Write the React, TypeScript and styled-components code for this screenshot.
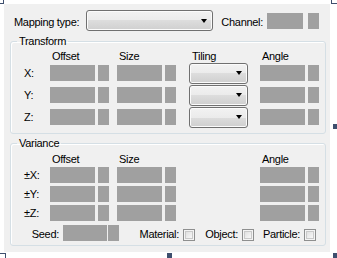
import React from 'react';
import styled, { createGlobalStyle } from 'styled-components';

const Global = createGlobalStyle`
  html, body { margin: 0; padding: 0; background: #fff; }
  body {
    font-family: "Liberation Sans", Arial, sans-serif;
    font-size: 11px;
    letter-spacing: -0.3px;
    color: #000;
  }
`;

const Canvas = styled.div`
  position: relative;
  width: 337px;
  height: 258px;
  box-sizing: border-box;
  padding: 4px 0 0 4px;
  background: #fff;
  overflow: hidden;
`;

const Panel = styled.div`
  width: 326px;
  height: 248px;
  box-sizing: border-box;
  background: #f0f0f0;
  padding: 6px 0 0 6px;
  display: flex;
  flex-direction: column;
`;

const TopRow = styled.div`
  display: flex;
  align-items: center;
  height: 21px;
  padding-left: 4px;
`;

const Label = styled.span<{ $w?: number; $right?: boolean; $pr?: number }>`
  display: block;
  box-sizing: border-box;
  width: ${(p) => (p.$w ? `${p.$w}px` : 'auto')};
  text-align: ${(p) => (p.$right ? 'right' : 'left')};
  padding-right: ${(p) => p.$pr ?? 0}px;
  padding-top: 3px;
  line-height: 13px;
  white-space: nowrap;
  flex: none;
`;

const ComboBox = styled.div<{ $w: number }>`
  width: ${(p) => p.$w}px;
  height: 21px;
  box-sizing: border-box;
  border: 1px solid #707070;
  border-radius: 3px;
  background: linear-gradient(#f2f2f2 0%, #ebebeb 50%, #dddddd 50%, #cfcfcf 100%);
  box-shadow: inset 0 0 0 1px #fbfbfb;
  display: flex;
  justify-content: flex-end;
  align-items: center;
  flex: none;
`;

const Arrow = styled.span`
  display: block;
  width: 0;
  height: 0;
  margin-right: 5px;
  border-left: 3.5px solid transparent;
  border-right: 3.5px solid transparent;
  border-top: 4px solid #000;
`;

const Combo = ({ w }: { w: number }) => (
  <ComboBox $w={w}>
    <Arrow />
  </ComboBox>
);

const SpinWrap = styled.div<{ $ml?: number; $gap: number }>`
  display: flex;
  height: 16px;
  gap: ${(p) => p.$gap}px;
  margin-left: ${(p) => p.$ml ?? 0}px;
  flex: none;
`;

const SpinText = styled.div<{ $w: number }>`
  width: ${(p) => p.$w}px;
  background: #a0a0a0;
`;

const SpinButton = styled.div`
  width: 11px;
  background: #a0a0a0;
`;

const Spin = ({ w = 45, gap = 3, ml }: { w?: number; gap?: number; ml?: number }) => (
  <SpinWrap $gap={gap} $ml={ml}>
    <SpinText $w={w} />
    <SpinButton />
  </SpinWrap>
);

const Group = styled.fieldset<{ $mt: number; $pb: number }>`
  width: 316px;
  box-sizing: border-box;
  margin: ${(p) => p.$mt}px 0 0 0;
  padding: 0 0 ${(p) => p.$pb}px 0;
  min-width: 0;
  border: 1px solid #d5dfe5;
  border-radius: 3px;
  box-shadow: inset 1px 1px 0 #fff;
`;

const Caption = styled.legend`
  margin-left: 6px;
  padding: 0 2px;
  line-height: 13px;
  font-size: 11px;
`;

const Grid = styled.div<{ $mt: number; $rowH: number }>`
  display: grid;
  grid-template-columns: 39px 67px 72px 71px auto;
  grid-template-rows: 11px repeat(3, ${(p) => p.$rowH}px);
  align-items: center;
  margin-top: ${(p) => p.$mt}px;
`;

const Head = styled.span<{ $pl?: number }>`
  line-height: 11px;
  padding-left: ${(p) => p.$pl ?? 2}px;
  align-self: start;
  white-space: nowrap;
`;

const RowLabel = styled.span`
  padding-left: 13px;
  padding-top: 1px;
  line-height: 13px;
  white-space: nowrap;
`;

const Cell = styled.div`
  display: flex;
  align-items: center;
`;

const Empty = styled.span``;

const SeedRow = styled.div`
  display: flex;
  align-items: center;
  height: 22px;
`;

const CheckBox = styled.span<{ $ml: number }>`
  display: block;
  width: 12px;
  height: 12px;
  box-sizing: border-box;
  margin-left: ${(p) => p.$ml}px;
  margin-top: 4px;
  border: 1px solid #8e8f8f;
  background: linear-gradient(135deg, #d8d8d8 0%, #f4f4f4 70%, #fdfdfd 100%);
  box-shadow: inset 0 0 0 1px #f4f4f4, inset 0 0 0 2px #c9c9c9;
  flex: none;
`;

const CornerMark = styled.span<{ $x: number; $y: number; $w: number; $h: number; $sides: string }>`
  position: absolute;
  left: ${(p) => p.$x}px;
  top: ${(p) => p.$y}px;
  width: ${(p) => p.$w}px;
  height: ${(p) => p.$h}px;
  box-sizing: border-box;
  border: 0 solid #3e4f6e;
  ${(p) => p.$sides}
`;

const Handle = styled.span<{ $x: number; $y: number }>`
  position: absolute;
  left: ${(p) => p.$x}px;
  top: ${(p) => p.$y}px;
  width: 5px;
  height: 5px;
  background: #3e4f6e;
`;

const axes = ['X', 'Y', 'Z'];

export default function App() {
  return (
    <>
      <Global />
      <Canvas>
        <Panel>
          <TopRow>
            <Label $w={72}>Mapping type:</Label>
            <Combo w={127} />
            <Label $w={54} $right $pr={4}>Channel:</Label>
            <Spin w={36} gap={5} />
          </TopRow>

          <Group $mt={4} $pb={5}>
            <Caption>Transform</Caption>
            <Grid $mt={3} $rowH={22}>
              <Empty />
              <Head>Offset</Head>
              <Head>Size</Head>
              <Head $pl={3}>Tiling</Head>
              <Head>Angle</Head>
              {axes.map((a) => (
                <React.Fragment key={a}>
                  <RowLabel>{a}:</RowLabel>
                  <Cell><Spin /></Cell>
                  <Cell><Spin /></Cell>
                  <Cell><Combo w={59} /></Cell>
                  <Cell><Spin /></Cell>
                </React.Fragment>
              ))}
            </Grid>
          </Group>

          <Group $mt={3} $pb={1}>
            <Caption>Variance</Caption>
            <Grid $mt={4} $rowH={19}>
              <Empty />
              <Head>Offset</Head>
              <Head>Size</Head>
              <Empty />
              <Head>Angle</Head>
              {axes.map((a) => (
                <React.Fragment key={a}>
                  <RowLabel>±{a}:</RowLabel>
                  <Cell><Spin /></Cell>
                  <Cell><Spin /></Cell>
                  <Empty />
                  <Cell><Spin /></Cell>
                </React.Fragment>
              ))}
            </Grid>
            <SeedRow>
              <Label $w={48} $right>Seed:</Label>
              <Spin w={44} gap={1} ml={4} />
              <Label $w={60} $right>Material:</Label>
              <CheckBox $ml={4} />
              <Label $w={43} $right>Object:</Label>
              <CheckBox $ml={4} />
              <Label $w={46} $right>Particle:</Label>
              <CheckBox $ml={4} />
            </SeedRow>
          </Group>
        </Panel>

        <CornerMark $x={0} $y={0} $w={4} $h={4} $sides="border-right-width:1px;border-bottom-width:1px;" />
        <CornerMark $x={331} $y={0} $w={6} $h={4} $sides="border-left-width:1px;border-bottom-width:1px;" />
        <CornerMark $x={0} $y={253} $w={6} $h={5} $sides="border-right-width:1px;border-top-width:1px;" />
        <Handle $x={333} $y={124} />
        <Handle $x={167} $y={253} />
        <Handle $x={333} $y={253} />
      </Canvas>
    </>
  );
}
